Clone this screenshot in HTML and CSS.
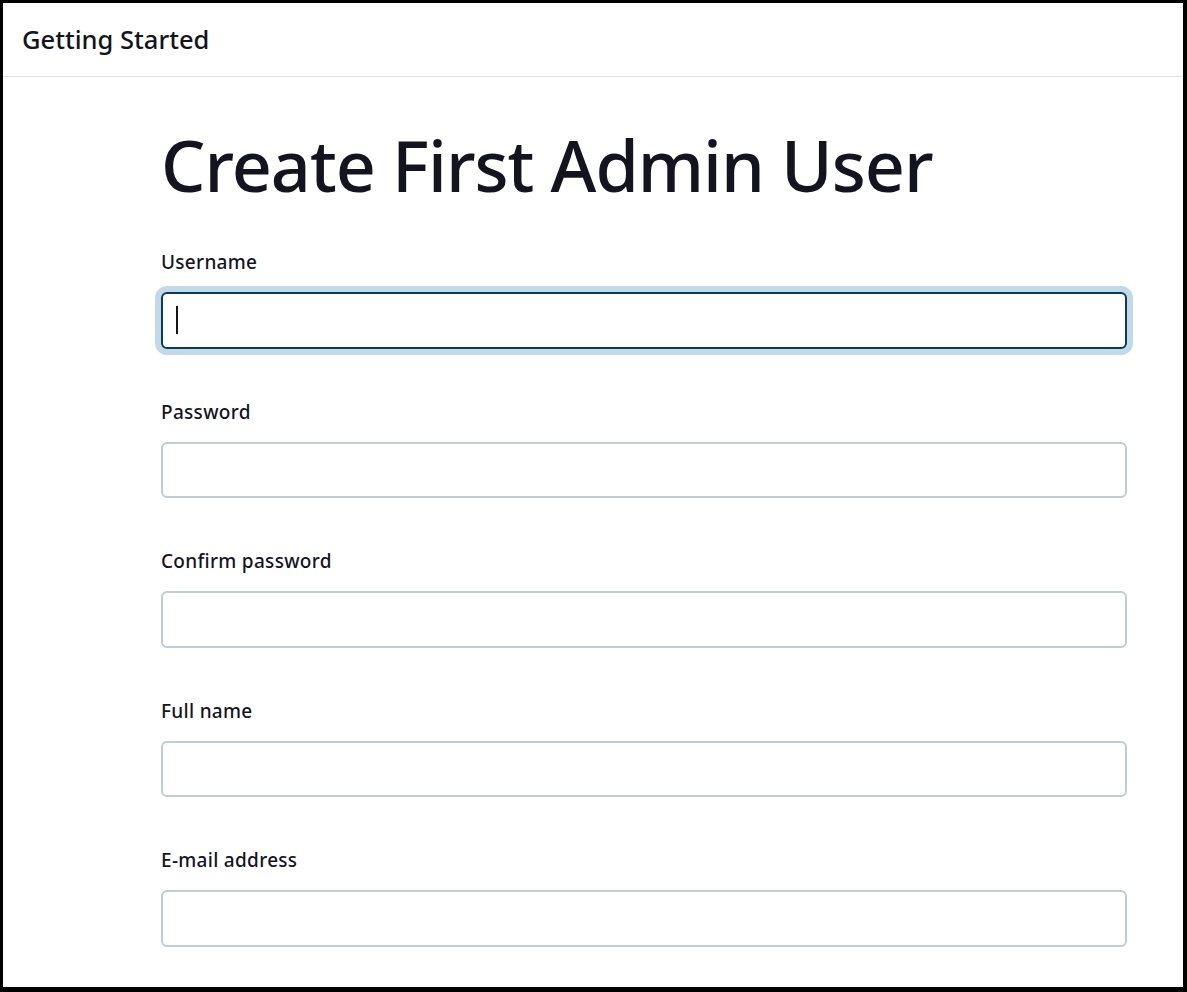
FILE: index.html
```html
<!DOCTYPE html>
<html lang="en">
<head>
<meta charset="utf-8">
<title>Getting Started</title>
<link rel="stylesheet" href="styles.css">
</head>
<body>
<div class="frame">
  <header class="topbar">
    <span class="topbar-title">Getting Started</span>
  </header>
  <main class="content">
    <h1 class="page-title">Create First Admin User</h1>
    <form class="admin-form">
      <div class="field">
        <label class="field-label" for="username">Username</label>
        <div class="field-control">
          <input class="text-input is-focused" id="username" type="text">
          <span class="caret"></span>
        </div>
      </div>
      <div class="field">
        <label class="field-label" for="password1">Password</label>
        <div class="field-control">
          <input class="text-input" id="password1" type="password">
        </div>
      </div>
      <div class="field">
        <label class="field-label" for="password2">Confirm password</label>
        <div class="field-control">
          <input class="text-input" id="password2" type="password">
        </div>
      </div>
      <div class="field">
        <label class="field-label" for="fullname">Full name</label>
        <div class="field-control">
          <input class="text-input" id="fullname" type="text">
        </div>
      </div>
      <div class="field">
        <label class="field-label" for="email">E-mail address</label>
        <div class="field-control">
          <input class="text-input" id="email" type="email">
        </div>
      </div>
    </form>
  </main>
</div>
</body>
</html>
```

FILE: styles.css
```css
* {
  box-sizing: border-box;
}

html, body {
  margin: 0;
  padding: 0;
  background: #000;
}

body {
  font-family: "Noto Sans", "Open Sans", "Liberation Sans", sans-serif;
  color: #14141f;
}

.frame {
  width: 1187px;
  height: 992px;
  border-style: solid;
  border-color: #000;
  border-width: 3px 4px 5px 3px;
  background: #fff;
  overflow: hidden;
  display: flex;
  flex-direction: column;
}

.topbar {
  height: 74px;
  flex: none;
  display: flex;
  align-items: center;
  padding-left: 19px;
  padding-bottom: 2px;
  border-bottom: 1px solid #e4e4e6;
}

.topbar-title {
  font-size: 25.5px;
  font-weight: 500;
  color: #14141f;
}

.content {
  padding: 0 0 0 158px;
}

.page-title {
  margin: 40px 0 0;
  font-size: 70px;
  font-weight: 500;
  letter-spacing: -1px;
  line-height: 96px;
  color: #14141f;
}

.admin-form {
  width: 966px;
  display: flex;
  flex-direction: column;
  gap: 51px;
  margin-top: 37px;
}

.field {
  display: flex;
  flex-direction: column;
  gap: 18px;
}

.field-label {
  font-size: 19px;
  font-weight: 500;
  letter-spacing: 0.3px;
  line-height: 24px;
  color: #14141f;
}

.field-control {
  position: relative;
}

.text-input {
  display: block;
  width: 100%;
  height: 56.5px;
  border: 2px solid #c2cbd2;
  border-radius: 6px;
  background: #fff;
  outline: none;
  font: inherit;
  font-size: 18px;
  padding: 0 14px;
}

.text-input.is-focused {
  border-color: #0b3b5c;
  box-shadow: 0 0 0 6px #c1d9e8;
}

.caret {
  position: absolute;
  left: 15px;
  top: 14px;
  width: 2px;
  height: 28px;
  background: #14141f;
}
```
